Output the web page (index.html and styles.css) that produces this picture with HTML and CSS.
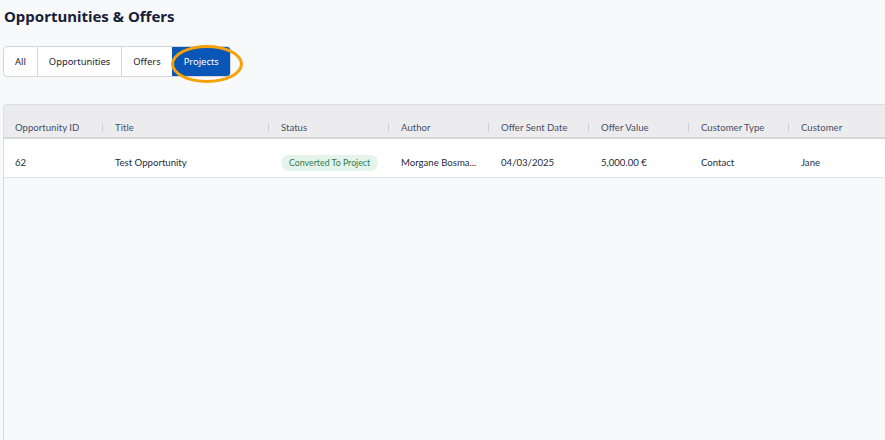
FILE: index.html
```html
<!DOCTYPE html>
<html lang="en">

<head>
    <meta charset="UTF-8">
    <meta name="viewport" content="width=device-width, initial-scale=1.0">
    <title>Opportunities &amp; Offers</title>
    <link rel="stylesheet" href="styles.css">
</head>

<body>
    <div class="page">
        <h1 class="page_title">Opportunities &amp; Offers</h1>

        <div class="tabs">
            <button class="tab">All</button>
            <button class="tab">Opportunities</button>
            <button class="tab">Offers</button>
            <button class="tab tab_active">Projects<span class="ring"></span></button>
        </div>

        <div class="grid_panel">
            <table class="grid">
                <colgroup>
                    <col style="width: 100px">
                    <col style="width: 166px">
                    <col style="width: 120px">
                    <col style="width: 100px">
                    <col style="width: 100px">
                    <col style="width: 100px">
                    <col style="width: 100px">
                    <col style="width: 100px">
                </colgroup>
                <thead>
                    <tr>
                        <th>Opportunity ID</th>
                        <th>Title</th>
                        <th>Status</th>
                        <th>Author</th>
                        <th>Offer Sent Date</th>
                        <th>Offer Value</th>
                        <th>Customer Type</th>
                        <th class="last">Customer</th>
                    </tr>
                </thead>
                <tbody>
                    <tr>
                        <td>62</td>
                        <td>Test Opportunity</td>
                        <td><span class="badge">Converted To Project</span></td>
                        <td>Morgane Bosma...</td>
                        <td>04/03/2025</td>
                        <td>5,000.00 €</td>
                        <td>Contact</td>
                        <td>Jane</td>
                    </tr>
                </tbody>
            </table>
        </div>
    </div>
</body>

</html>
```

FILE: styles.css
```css
* {
    margin: 0;
    padding: 0;
    box-sizing: border-box;
}

html,
body {
    height: 100%;
}

body {
    background-color: #f8f9fb;
    font-family: "Noto Sans", "Open Sans", sans-serif;
    color: #1b2336;
    overflow: hidden;
}

.page {
    display: flex;
    flex-direction: column;
    height: 100%;
    padding: 5px 0 0 3px;
}

.page_title {
    margin-left: 1px;
    font-size: 15px;
    line-height: 22px;
    font-weight: 700;
    color: #18213a;
}

.tabs {
    display: flex;
    align-self: flex-start;
    margin-top: 19px;
    border: 1px solid #d3d5db;
    border-radius: 4px;
    background-color: #fff;
}

.tab {
    position: relative;
    height: 29px;
    padding: 0 11px;
    border: none;
    border-left: 1px solid #d3d5db;
    background: none;
    font-family: "Noto Sans", "Open Sans", sans-serif;
    font-size: 9.4px;
    color: #1b2336;
}

.tab:first-child {
    border-left: none;
    border-radius: 4px 0 0 4px;
}

.tab_active {
    background-color: #0a56b6;
    border-left-color: #0a56b6;
    border-radius: 0 3px 3px 0;
    color: #fff;
}

/* highlight drawn over the active tab */
.ring {
    position: absolute;
    left: -2px;
    top: -2px;
    width: 72px;
    height: 38px;
    border: 3px solid #f4a208;
    border-radius: 50%;
}

.grid_panel {
    flex: 1;
    margin-top: 27px;
    border-left: 1px solid #dcdde2;
    border-top: 1px solid #dfe0e4;
    border-top-left-radius: 4px;
    overflow: hidden;
}

.grid {
    width: 886px;
    table-layout: fixed;
    border-collapse: collapse;
    font-family: "Lato", sans-serif;
    font-size: 9.6px;
    text-align: left;
}

.grid th {
    position: relative;
    height: 32px;
    padding: 16px 11px 2px;
    line-height: 14px;
    font-weight: 400;
    color: #4a4f66;
    background-color: #ececef;
    border-bottom: 2px solid #d6d7dc;
    white-space: nowrap;
}

.grid th::after {
    content: "";
    position: absolute;
    right: 1px;
    top: 18px;
    width: 1px;
    height: 9px;
    background-color: #cfd0d5;
}

.grid th.last::after {
    display: none;
}

.grid td {
    height: 37px;
    padding: 16px 11px 6px;
    line-height: 14px;
    color: #262b40;
    background-color: #fff;
    border-bottom: 1px solid #e2e3e8;
    white-space: nowrap;
    overflow: hidden;
}

.badge {
    display: inline-block;
    height: 16px;
    padding: 0 8px;
    line-height: 16px;
    border-radius: 8px;
    background-color: #e5f4eb;
    color: #2f7a52;
    font-size: 8.8px;
}
```
